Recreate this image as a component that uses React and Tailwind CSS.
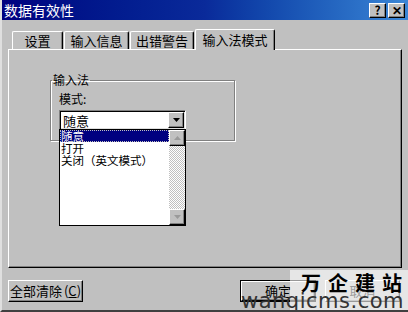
import React from 'react';

const font = { fontFamily: '"Noto Sans CJK SC", "Liberation Sans", sans-serif' };

// Win98-style raised edge
const raised = 'bg-[#c0c0c0] border border-t-white border-l-white border-b-black border-r-black shadow-[inset_-1px_-1px_0_#808080]';

const Tab = ({ label, active, w }) => (
  <div
    className={`flex items-center justify-center border-l border-t border-r border-l-white border-t-white border-r-black shadow-[inset_-1px_0_0_#808080] rounded-t-[2px] bg-[#c0c0c0] text-[13px] text-black ${
      active ? 'h-[21px] -mb-px z-10 relative' : 'h-[18px]'
    } ${w}`}
  >
    {label}
  </div>
);

const TitleButton = ({ children }) => (
  <div className={`${raised} w-[17px] h-[15px] flex items-center justify-center text-[12px] font-bold leading-none text-black`}>
    {children}
  </div>
);

const Arrow = ({ up, gray }) => (
  <svg width="7" height="4" viewBox="0 0 7 4">
    <path d={up ? 'M3.5 0 L7 4 L0 4 Z' : 'M0 0 L7 0 L3.5 4 Z'} fill={gray ? '#9a9a9a' : '#000'} />
  </svg>
);

export default function App() {
  return (
    <div style={font} className="w-[408px] h-[312px] bg-[#c0c0c0] border-l-2 border-l-[#dfdfdf] border-b-2 border-b-[#404040] flex flex-col relative overflow-hidden">
      {/* title bar */}
      <div className="h-[20px] flex items-center justify-between pl-[2px] pr-[3px] bg-gradient-to-r from-[#000080] via-[#0a2a9a] to-[#3b86d6]">
        <span className="text-white text-[14px] leading-none">数据有效性</span>
        <div className="flex gap-[2px]">
          <TitleButton>?</TitleButton>
          <TitleButton>✕</TitleButton>
        </div>
      </div>

      {/* tabs */}
      <div className="flex items-end pl-[10px] pt-[9px] gap-px">
        <Tab label="设置" w="w-[51px]" />
        <Tab label="输入信息" w="w-[65px]" />
        <Tab label="出错警告" w="w-[64px]" />
        <Tab label="输入法模式" w="w-[80px]" active />
      </div>

      {/* panel */}
      <div className="ml-[6px] mr-[6px] h-[219px] border border-t-white border-l-white border-b-black border-r-black shadow-[inset_-1px_-1px_0_#808080] pl-[41px] pt-[24px]">
        <fieldset className="w-[185px] h-[67px] border border-[#808080] shadow-[1px_1px_0_#fff,inset_1px_1px_0_#fff] px-[8px] relative">
          <legend className="text-[12px] leading-none text-black px-[1px] ml-[-7px]">输入法</legend>
          <div className="text-[12px] leading-none text-black mt-[7px]">模式:</div>
          <div className="relative mt-[5px] w-[127px]">
            <div className="h-[20px] bg-white border border-t-[#808080] border-l-[#808080] border-b-white border-r-white shadow-[inset_1px_1px_0_#000,inset_-1px_-1px_0_#dfdfdf] flex items-center">
              <span className="text-[13px] leading-none text-black pl-[3px] flex-1">随意</span>
              <div className={`${raised} w-[16px] h-[16px] mr-[1px] flex items-center justify-center`}>
                <Arrow />
              </div>
            </div>
            {/* open dropdown list */}
            <div className="absolute left-0 top-[19px] w-[127px] h-[97px] bg-white border border-black flex z-20">
              <div className="flex-1 flex flex-col text-[11.5px] leading-[12px] text-black">
                <div className="h-[12px] bg-[#000080] text-white outline-1 outline-dotted outline-[#c0c0c0] -outline-offset-1 pl-[1px]">随意</div>
                <div className="h-[12px] pl-[1px]">打开</div>
                <div className="h-[12px] pl-[1px]">关闭（英文模式）</div>
              </div>
              <div className="w-[16px] flex flex-col bg-[repeating-conic-gradient(#c0c0c0_0_25%,#ffffff_0_50%)] bg-[length:2px_2px]">
                <div className={`${raised} h-[16px] flex items-center justify-center`}>
                  <Arrow up gray />
                </div>
                <div className="flex-1" />
                <div className={`${raised} h-[16px] flex items-center justify-center`}>
                  <Arrow gray />
                </div>
              </div>
            </div>
          </div>
        </fieldset>
      </div>

      {/* bottom buttons */}
      <div className="flex items-center pl-[6px] pr-[8px] mt-[12px]">
        <div className={`${raised} h-[22px] w-[75px] flex items-center justify-center text-[13px] text-black`}>
          全部清除 <span className="ml-[2px]">(<span className="underline">C</span>)</span>
        </div>
        <div className="flex-1" />
        <div className="h-[22px] w-[76px] border border-black">
          <div className={`${raised} h-full flex items-center justify-center text-[13px] text-black`}>确定</div>
        </div>
        <div className={`${raised} ml-[9px] h-[22px] w-[75px] flex items-center justify-center text-[13px] text-black`}>取消</div>
      </div>

      {/* watermark */}
      <div className="absolute right-0 bottom-0 w-[118px] h-[40px] bg-white/60 flex flex-col items-end pr-[6px] leading-none whitespace-nowrap">
        <span className="text-[20px] font-bold text-black tracking-[7px] -mr-[7px] mt-[3px]">万企建站</span>
        <span className="text-[21px] text-[#333] tracking-[0.5px] -mr-[2px] -mt-[2px]" style={{ fontFamily: '"DejaVu Sans", sans-serif' }}>wanqicms.com</span>
      </div>
    </div>
  );
}
